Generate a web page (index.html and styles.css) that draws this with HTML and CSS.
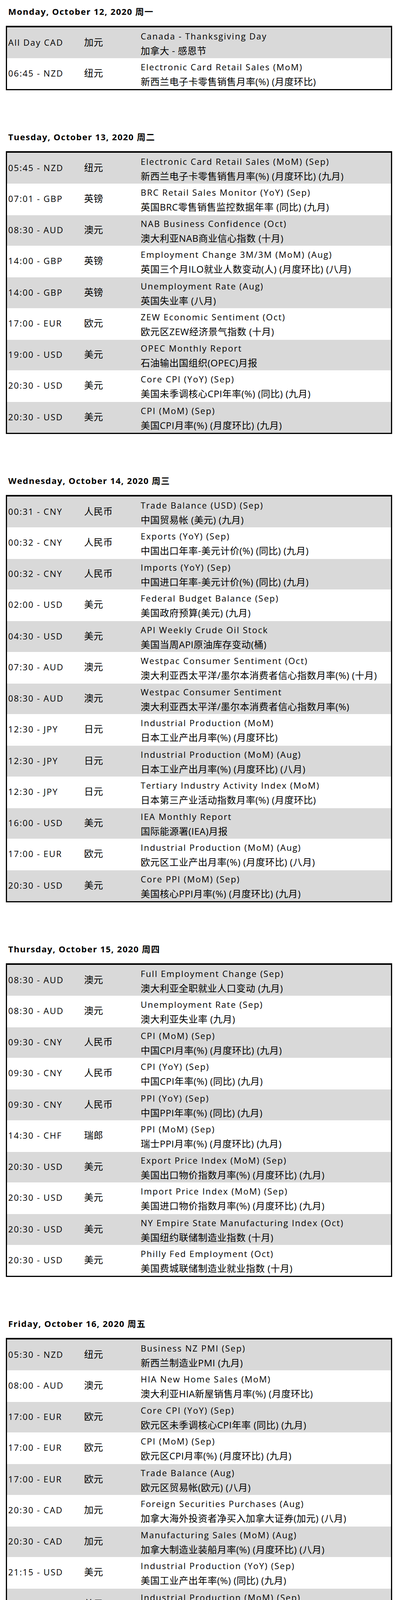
FILE: index.html
```html
<!DOCTYPE html>
<html lang="zh-CN">
<head>
<meta charset="utf-8">
<title>Economic Calendar</title>
<link rel="stylesheet" href="styles.css">
</head>
<body>
<div class="page">

<section class="day">
<h2 class="day-title">Monday, October 12, 2020 周一</h2>
<table class="cal">
<tr><td class="c-time">All Day CAD</td><td class="c-cur">加元</td><td class="c-ev"><div class="en">Canada - Thanksgiving Day</div><div class="cn">加拿大 - 感恩节</div></td></tr>
<tr><td class="c-time">06:45 - NZD</td><td class="c-cur">纽元</td><td class="c-ev"><div class="en">Electronic Card Retail Sales (MoM)</div><div class="cn">新西兰电子卡零售销售月率(%) (月度环比)</div></td></tr>
</table>
</section>

<section class="day">
<h2 class="day-title">Tuesday, October 13, 2020 周二</h2>
<table class="cal">
<tr><td class="c-time">05:45 - NZD</td><td class="c-cur">纽元</td><td class="c-ev"><div class="en">Electronic Card Retail Sales (MoM) (Sep)</div><div class="cn">新西兰电子卡零售销售月率(%) (月度环比) (九月)</div></td></tr>
<tr><td class="c-time">07:01 - GBP</td><td class="c-cur">英镑</td><td class="c-ev"><div class="en">BRC Retail Sales Monitor (YoY) (Sep)</div><div class="cn">英国BRC零售销售监控数据年率 (同比) (九月)</div></td></tr>
<tr><td class="c-time">08:30 - AUD</td><td class="c-cur">澳元</td><td class="c-ev"><div class="en">NAB Business Confidence (Oct)</div><div class="cn">澳大利亚NAB商业信心指数 (十月)</div></td></tr>
<tr><td class="c-time">14:00 - GBP</td><td class="c-cur">英镑</td><td class="c-ev"><div class="en">Employment Change 3M/3M (MoM) (Aug)</div><div class="cn">英国三个月ILO就业人数变动(人) (月度环比) (八月)</div></td></tr>
<tr><td class="c-time">14:00 - GBP</td><td class="c-cur">英镑</td><td class="c-ev"><div class="en">Unemployment Rate (Aug)</div><div class="cn">英国失业率 (八月)</div></td></tr>
<tr><td class="c-time">17:00 - EUR</td><td class="c-cur">欧元</td><td class="c-ev"><div class="en">ZEW Economic Sentiment (Oct)</div><div class="cn">欧元区ZEW经济景气指数 (十月)</div></td></tr>
<tr><td class="c-time">19:00 - USD</td><td class="c-cur">美元</td><td class="c-ev"><div class="en">OPEC Monthly Report</div><div class="cn">石油输出国组织(OPEC)月报</div></td></tr>
<tr><td class="c-time">20:30 - USD</td><td class="c-cur">美元</td><td class="c-ev"><div class="en">Core CPI (YoY) (Sep)</div><div class="cn">美国未季调核心CPI年率(%) (同比) (九月)</div></td></tr>
<tr><td class="c-time">20:30 - USD</td><td class="c-cur">美元</td><td class="c-ev"><div class="en">CPI (MoM) (Sep)</div><div class="cn">美国CPI月率(%) (月度环比) (九月)</div></td></tr>
</table>
</section>

<section class="day">
<h2 class="day-title">Wednesday, October 14, 2020 周三</h2>
<table class="cal">
<tr><td class="c-time">00:31 - CNY</td><td class="c-cur">人民币</td><td class="c-ev"><div class="en">Trade Balance (USD) (Sep)</div><div class="cn">中国贸易帐 (美元) (九月)</div></td></tr>
<tr><td class="c-time">00:32 - CNY</td><td class="c-cur">人民币</td><td class="c-ev"><div class="en">Exports (YoY) (Sep)</div><div class="cn">中国出口年率-美元计价(%) (同比) (九月)</div></td></tr>
<tr><td class="c-time">00:32 - CNY</td><td class="c-cur">人民币</td><td class="c-ev"><div class="en">Imports (YoY) (Sep)</div><div class="cn">中国进口年率-美元计价(%) (同比) (九月)</div></td></tr>
<tr><td class="c-time">02:00 - USD</td><td class="c-cur">美元</td><td class="c-ev"><div class="en">Federal Budget Balance (Sep)</div><div class="cn">美国政府预算(美元) (九月)</div></td></tr>
<tr><td class="c-time">04:30 - USD</td><td class="c-cur">美元</td><td class="c-ev"><div class="en">API Weekly Crude Oil Stock</div><div class="cn">美国当周API原油库存变动(桶)</div></td></tr>
<tr><td class="c-time">07:30 - AUD</td><td class="c-cur">澳元</td><td class="c-ev"><div class="en">Westpac Consumer Sentiment (Oct)</div><div class="cn">澳大利亚西太平洋/墨尔本消费者信心指数月率(%) (十月)</div></td></tr>
<tr><td class="c-time">08:30 - AUD</td><td class="c-cur">澳元</td><td class="c-ev"><div class="en">Westpac Consumer Sentiment</div><div class="cn">澳大利亚西太平洋/墨尔本消费者信心指数月率(%)</div></td></tr>
<tr><td class="c-time">12:30 - JPY</td><td class="c-cur">日元</td><td class="c-ev"><div class="en">Industrial Production (MoM)</div><div class="cn">日本工业产出月率(%) (月度环比)</div></td></tr>
<tr><td class="c-time">12:30 - JPY</td><td class="c-cur">日元</td><td class="c-ev"><div class="en">Industrial Production (MoM) (Aug)</div><div class="cn">日本工业产出月率(%) (月度环比) (八月)</div></td></tr>
<tr><td class="c-time">12:30 - JPY</td><td class="c-cur">日元</td><td class="c-ev"><div class="en">Tertiary Industry Activity Index (MoM)</div><div class="cn">日本第三产业活动指数月率(%) (月度环比)</div></td></tr>
<tr><td class="c-time">16:00 - USD</td><td class="c-cur">美元</td><td class="c-ev"><div class="en">IEA Monthly Report</div><div class="cn">国际能源署(IEA)月报</div></td></tr>
<tr><td class="c-time">17:00 - EUR</td><td class="c-cur">欧元</td><td class="c-ev"><div class="en">Industrial Production (MoM) (Aug)</div><div class="cn">欧元区工业产出月率(%) (月度环比) (八月)</div></td></tr>
<tr><td class="c-time">20:30 - USD</td><td class="c-cur">美元</td><td class="c-ev"><div class="en">Core PPI (MoM) (Sep)</div><div class="cn">美国核心PPI月率(%) (月度环比) (九月)</div></td></tr>
</table>
</section>

<section class="day">
<h2 class="day-title">Thursday, October 15, 2020 周四</h2>
<table class="cal">
<tr><td class="c-time">08:30 - AUD</td><td class="c-cur">澳元</td><td class="c-ev"><div class="en">Full Employment Change (Sep)</div><div class="cn">澳大利亚全职就业人口变动 (九月)</div></td></tr>
<tr><td class="c-time">08:30 - AUD</td><td class="c-cur">澳元</td><td class="c-ev"><div class="en">Unemployment Rate (Sep)</div><div class="cn">澳大利亚失业率 (九月)</div></td></tr>
<tr><td class="c-time">09:30 - CNY</td><td class="c-cur">人民币</td><td class="c-ev"><div class="en">CPI (MoM) (Sep)</div><div class="cn">中国CPI月率(%) (月度环比) (九月)</div></td></tr>
<tr><td class="c-time">09:30 - CNY</td><td class="c-cur">人民币</td><td class="c-ev"><div class="en">CPI (YoY) (Sep)</div><div class="cn">中国CPI年率(%) (同比) (九月)</div></td></tr>
<tr><td class="c-time">09:30 - CNY</td><td class="c-cur">人民币</td><td class="c-ev"><div class="en">PPI (YoY) (Sep)</div><div class="cn">中国PPI年率(%) (同比) (九月)</div></td></tr>
<tr><td class="c-time">14:30 - CHF</td><td class="c-cur">瑞郎</td><td class="c-ev"><div class="en">PPI (MoM) (Sep)</div><div class="cn">瑞士PPI月率(%) (月度环比) (九月)</div></td></tr>
<tr><td class="c-time">20:30 - USD</td><td class="c-cur">美元</td><td class="c-ev"><div class="en">Export Price Index (MoM) (Sep)</div><div class="cn">美国出口物价指数月率(%) (月度环比) (九月)</div></td></tr>
<tr><td class="c-time">20:30 - USD</td><td class="c-cur">美元</td><td class="c-ev"><div class="en">Import Price Index (MoM) (Sep)</div><div class="cn">美国进口物价指数月率(%) (月度环比) (九月)</div></td></tr>
<tr><td class="c-time">20:30 - USD</td><td class="c-cur">美元</td><td class="c-ev"><div class="en">NY Empire State Manufacturing Index (Oct)</div><div class="cn">美国纽约联储制造业指数 (十月)</div></td></tr>
<tr><td class="c-time">20:30 - USD</td><td class="c-cur">美元</td><td class="c-ev"><div class="en">Philly Fed Employment (Oct)</div><div class="cn">美国费城联储制造业就业指数 (十月)</div></td></tr>
</table>
</section>

<section class="day">
<h2 class="day-title">Friday, October 16, 2020 周五</h2>
<table class="cal">
<tr><td class="c-time">05:30 - NZD</td><td class="c-cur">纽元</td><td class="c-ev"><div class="en">Business NZ PMI (Sep)</div><div class="cn">新西兰制造业PMI (九月)</div></td></tr>
<tr><td class="c-time">08:00 - AUD</td><td class="c-cur">澳元</td><td class="c-ev"><div class="en">HIA New Home Sales (MoM)</div><div class="cn">澳大利亚HIA新屋销售月率(%) (月度环比)</div></td></tr>
<tr><td class="c-time">17:00 - EUR</td><td class="c-cur">欧元</td><td class="c-ev"><div class="en">Core CPI (YoY) (Sep)</div><div class="cn">欧元区未季调核心CPI年率 (同比) (九月)</div></td></tr>
<tr><td class="c-time">17:00 - EUR</td><td class="c-cur">欧元</td><td class="c-ev"><div class="en">CPI (MoM) (Sep)</div><div class="cn">欧元区CPI月率(%) (月度环比) (九月)</div></td></tr>
<tr><td class="c-time">17:00 - EUR</td><td class="c-cur">欧元</td><td class="c-ev"><div class="en">Trade Balance (Aug)</div><div class="cn">欧元区贸易帐(欧元) (八月)</div></td></tr>
<tr><td class="c-time">20:30 - CAD</td><td class="c-cur">加元</td><td class="c-ev"><div class="en">Foreign Securities Purchases (Aug)</div><div class="cn">加拿大海外投资者净买入加拿大证券(加元) (八月)</div></td></tr>
<tr><td class="c-time">20:30 - CAD</td><td class="c-cur">加元</td><td class="c-ev"><div class="en">Manufacturing Sales (MoM) (Aug)</div><div class="cn">加拿大制造业装船月率(%) (月度环比) (八月)</div></td></tr>
<tr><td class="c-time">21:15 - USD</td><td class="c-cur">美元</td><td class="c-ev"><div class="en">Industrial Production (YoY) (Sep)</div><div class="cn">美国工业产出年率(%) (同比) (九月)</div></td></tr>
<tr><td class="c-time">21:15 - USD</td><td class="c-cur">美元</td><td class="c-ev"><div class="en">Industrial Production (MoM) (Sep)</div><div class="cn">美国工业产出月率(%) (月度环比) (九月)</div></td></tr>
<tr><td class="c-time">22:00 - USD</td><td class="c-cur">美元</td><td class="c-ev"><div class="en">Business Inventories (MoM) (Aug)</div><div class="cn">美国营运库存月率(%) (月度环比) (八月)</div></td></tr>
<tr><td class="c-time">22:00 - USD</td><td class="c-cur">美元</td><td class="c-ev"><div class="en">Michigan Consumer Expectations (Oct)</div><div class="cn">美国密歇根大学消费者预期指数 (十月)</div></td></tr>
<tr><td class="c-time">22:00 - USD</td><td class="c-cur">美元</td><td class="c-ev"><div class="en">Michigan Consumer Sentiment (Oct)</div><div class="cn">美国密歇根大学消费者信心指数 (十月)</div></td></tr>
<tr><td class="c-time">22:00 - USD</td><td class="c-cur">美元</td><td class="c-ev"><div class="en">Retail Inventories Ex Auto (Aug)</div><div class="cn">美国除汽车外零售库存 (八月)</div></td></tr>
</table>
</section>

</div>
</body>
</html>
```

FILE: styles.css
```css
html, body {
  margin: 0;
  padding: 0;
  background: #ffffff;
}

body {
  color: #000000;
  font-family: "Open Sans", "Liberation Sans", "Noto Sans CJK SC", sans-serif;
  font-size: 22px;
}

.page {
  padding: 11.5px 15px 0;
}

.day + .day {
  margin-top: 102px;
}

.day-title {
  height: 34px;
  margin: 0 0 20.5px;
  padding-left: 6px;
  font-size: 22px;
  font-weight: 700;
  line-height: 34px;
  letter-spacing: 1.5px;
  white-space: nowrap;
}

.cal {
  width: 100%;
  table-layout: fixed;
  border-collapse: separate;
  border-spacing: 0;
  border: 3px solid #000000;
  border-top-width: 4px;
  background: #ffffff;
}

.cal td {
  line-height: 38px;
  white-space: nowrap;
}

.cal tr:nth-child(odd) td {
  background: #d9d9d9;
}

.cal tr:nth-child(odd):not(:first-child) td {
  border-top: 2px solid #ffffff;
}

.c-time {
  width: 194.5px;
  padding: 0 0 3px 3px;
  letter-spacing: 2px;
  vertical-align: middle;
}

.c-cur {
  width: 145px;
  padding: 0 0 3px 0;
  font-size: 24px;
  letter-spacing: 0.5px;
  vertical-align: middle;
}

.c-ev {
  padding: 2.5px 4px 0 0;
  vertical-align: top;
}

.cal tr:nth-child(even) .c-ev {
  padding-top: 3px;
}

.c-ev .en,
.c-ev .cn {
  height: 38px;
}

.c-ev .en {
  letter-spacing: 2px;
}

.c-ev .cn {
  font-size: 24px;
  letter-spacing: 0.5px;
}
```
